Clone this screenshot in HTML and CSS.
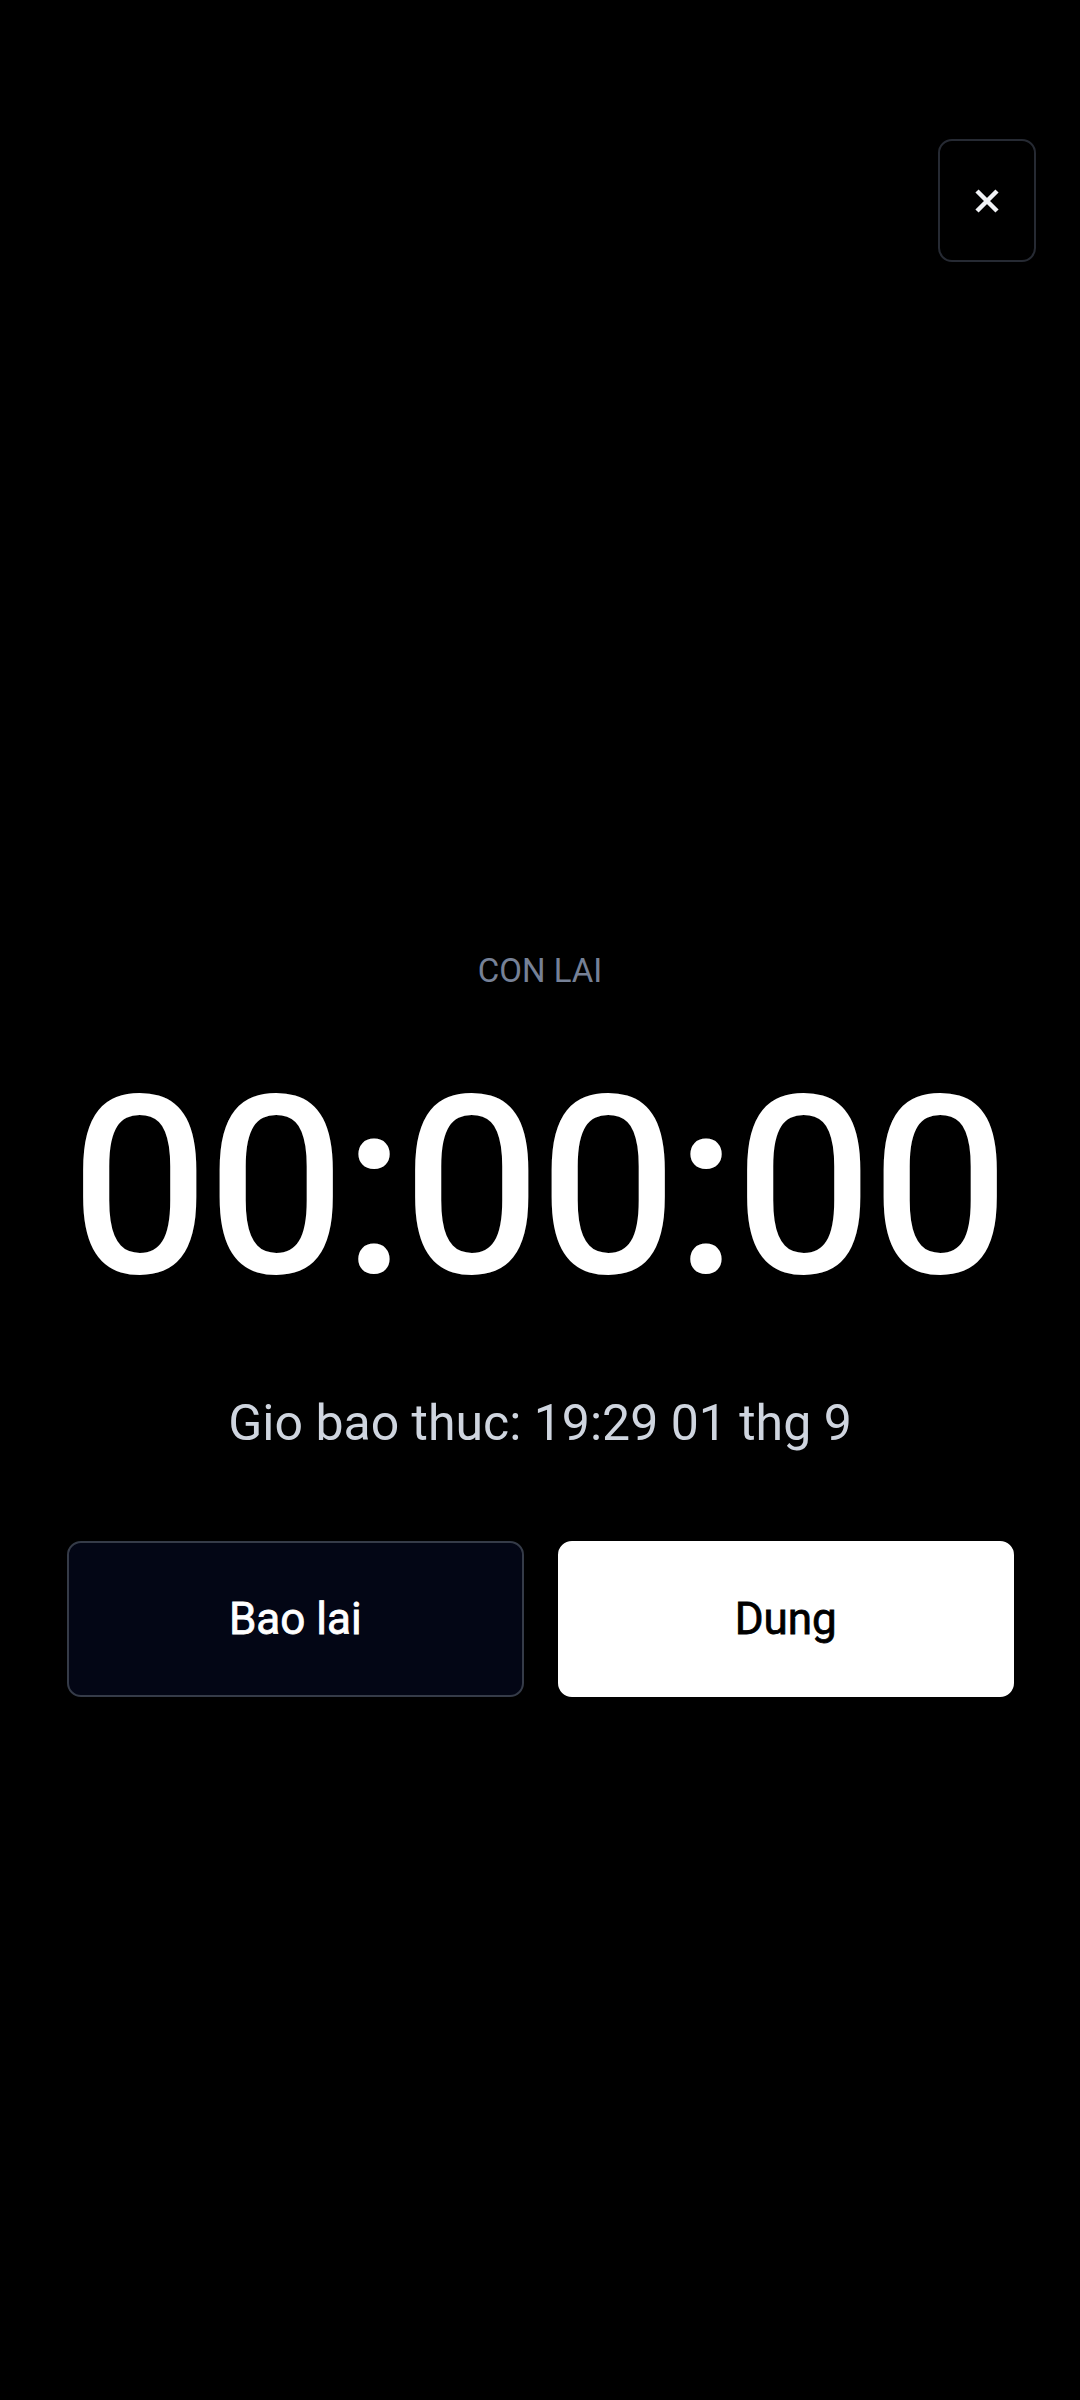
FILE: index.html
```html
<!DOCTYPE html>
<html lang="vi">
<head>
    <meta charset="UTF-8">
    <meta name="viewport" content="width=device-width, initial-scale=1.0">
    <title>Hen gio</title>
    <link rel="stylesheet" href="styles.css">
</head>
<body>
    <div class="screen">
        <div class="topbar">
            <button class="close" type="button" aria-label="Dong">
                <svg width="26" height="26" viewBox="0 0 26 26">
                    <path d="M3 3 L23 23 M23 3 L3 23" stroke="#f1f3f6" stroke-width="4.5" stroke-linecap="butt" fill="none"/>
                </svg>
            </button>
        </div>

        <div class="main">
            <div class="label">CON LAI</div>
            <div class="timer">00:00:00</div>
            <div class="alarm">Gio bao thuc: 19:29 01 thg 9</div>

            <div class="actions">
                <button class="btn btn-snooze" type="button">Bao lai</button>
                <button class="btn btn-stop" type="button">Dung</button>
            </div>
        </div>
    </div>
</body>
</html>
```

FILE: styles.css
```css
body {
    margin: 0;
    padding: 0;
    background: #000000;
    font-family: Roboto, "Liberation Sans", sans-serif;
    color: #ffffff;
}

.screen {
    width: 1080px;
    min-height: 2400px;
    display: flex;
    flex-direction: column;
}

.topbar {
    display: flex;
    justify-content: flex-end;
    padding: 139px 44px 0 0;
}

.close {
    width: 98px;
    height: 123px;
    border: 2px solid #262a33;
    border-radius: 14px;
    background: #000000;
    display: flex;
    align-items: center;
    justify-content: center;
    padding: 0;
}

.main {
    margin-top: 689px;
    display: flex;
    flex-direction: column;
    align-items: center;
}

.label {
    font-size: 33px;
    line-height: 40px;
    color: #768197;
}

/* roboto medium is not installed, so thicken the regular face a bit */
.timer {
    margin-top: 76px;
    font-size: 243px;
    line-height: 1;
    font-weight: 400;
    color: #ffffff;
    -webkit-text-stroke: 4px #ffffff;
}

.alarm {
    margin-top: 83px;
    font-size: 50px;
    line-height: 60px;
    color: #cfd5df;
}

.actions {
    margin-top: 88px;
    width: 100%;
    box-sizing: border-box;
    padding: 0 66px 0 67px;
    display: flex;
    gap: 34px;
}

.btn {
    flex: 1;
    height: 156px;
    border-radius: 14px;
    font-family: Roboto, "Liberation Sans", sans-serif;
    font-size: 44px;
    font-weight: 400;
    display: flex;
    align-items: center;
    justify-content: center;
    padding: 0;
    -webkit-text-stroke: 0.8px currentColor;
}

.btn-snooze {
    background: #030615;
    border: 2px solid #353b48;
    color: #ffffff;
}

.btn-stop {
    background: #ffffff;
    border: 2px solid #ffffff;
    color: #000000;
}
```
